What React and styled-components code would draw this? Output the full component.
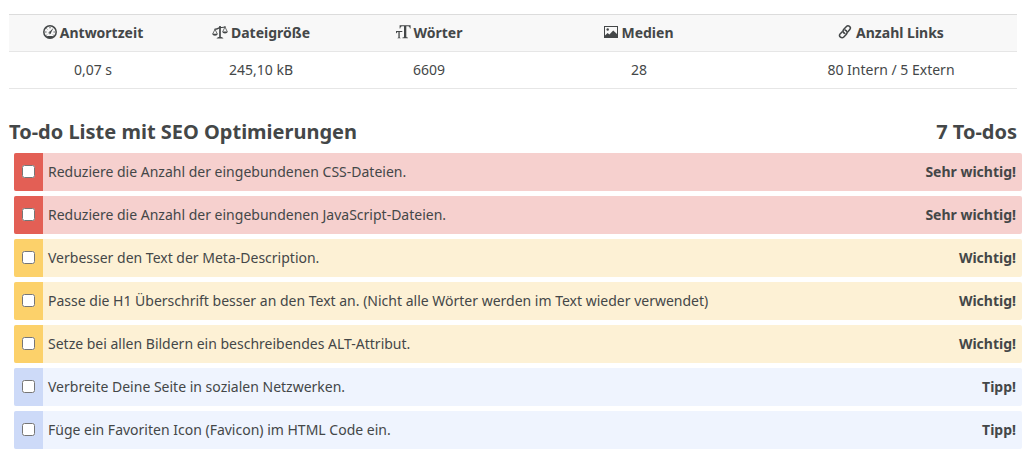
import React from "react";
import styled, { createGlobalStyle } from "styled-components";

const GlobalStyle = createGlobalStyle`
  * { box-sizing: border-box; }
  body {
    margin: 0;
    background: #fff;
    color: #444748;
    font-family: "Noto Sans", sans-serif;
    font-size: 14px;
    line-height: 20px;
  }
`;

const Page = styled.main`
  padding: 14px 10px 6px 9px;
`;

const StatsTable = styled.table`
  width: 100%;
  table-layout: fixed;
  border-collapse: separate;
  border-spacing: 0;
  border-top: 1px solid #dcdcdc;
`;

const StatHead = styled.th`
  width: ${(p) => p.$share};
  padding: 8px 0;
  background: #f8f8f8;
  border-bottom: 1px solid #e6e6e6;
  font-weight: 700;
`;

const StatCell = styled.td`
  padding: 8px 0;
  border-bottom: 1px solid #e6e6e6;
  text-align: center;
`;

const HeadLabel = styled.span`
  display: flex;
  justify-content: center;
  align-items: center;
  gap: 3px;
`;

const Icon = styled.svg`
  display: block;
  flex: none;
  height: 16px;
  margin-bottom: 2px;
`;

const ListHeader = styled.header`
  display: flex;
  justify-content: space-between;
  align-items: center;
  margin-top: 29px;
`;

const Title = styled.h2`
  margin: 0;
  font-size: 20px;
  line-height: 28px;
  font-weight: 700;
`;

const TodoList = styled.ul`
  display: flex;
  flex-direction: column;
  gap: 5px;
  margin: 7px -5px 0 5px;
  padding: 0;
  list-style: none;
`;

const tones = {
  high: { mark: "#e35f55", fill: "#f6d0ce" },
  medium: { mark: "#fcd16a", fill: "#fdf1d5" },
  tip: { mark: "#cddaf8", fill: "#eff4fe" },
};

const TodoItem = styled.li`
  display: flex;
  align-items: center;
  min-height: 38px;
  padding-right: 6px;
  overflow: hidden;
  border-radius: 2px;
  background: ${(p) => tones[p.$tone].fill};
`;

const Mark = styled.span`
  display: flex;
  flex: none;
  align-self: stretch;
  align-items: center;
  justify-content: center;
  width: 29px;
  padding-bottom: 1px;
  background: ${(p) => tones[p.$tone].mark};
`;

const Checkbox = styled.input`
  width: 13px;
  height: 13px;
  margin: 0;
`;

const TodoLabel = styled.label`
  flex: 1;
  padding-left: 5px;
`;

const Priority = styled.strong`
  font-weight: 700;
`;

const GaugeIcon = () => (
  <Icon viewBox="0 0 14 16" width="14" aria-hidden="true" fill="none" stroke="currentColor">
    <circle cx="7" cy="8" r="6.2" strokeWidth="1.5" />
    <path d="M7 3v1.3M3.5 4.5l.8.8M2.2 8h1.3M10.5 8h1.3M3.4 11.3l.8-.6M10.6 11.3l-.8-.6" strokeWidth="1" />
    <path d="M10.6 3.8L6.1 8.2l1.5 1.3z" fill="currentColor" stroke="none" />
    <circle cx="6.8" cy="8.9" r=".9" strokeWidth=".8" />
    <path d="M3.9 12.1h6.200l-.9 2.100H4.800z" fill="currentColor" stroke="none" />
  </Icon>
);

const ScaleIcon = () => (
  <Icon viewBox="0 0 16 16" width="16" aria-hidden="true" fill="none" stroke="currentColor">
    <path d="M2.5 5.1C5.4 5.7 6 3.900 8 3.600s3.200.4 5.500-1.100" strokeWidth="1.2" />
    <path d="M8 2v11" strokeWidth="1.7" />
    <path d="M4.600 14.600c0-1.100 1.400-1.600 3.400-1.600s3.400.5 3.400 1.600z" fill="currentColor" stroke="none" />
    <path d="M3 5.300L.7 10M3 5.300L5.300 10M13 3l-2.300 4.700M13 3l2.300 4.700" strokeWidth=".8" />
    <path d="M.2 9.800h5.600c-.3 2.600-5.300 2.600-5.600 0zM10.200 7.500h5.600c-.3 2.600-5.300 2.600-5.600 0z" fill="currentColor" stroke="none" />
  </Icon>
);

const TextIcon = () => (
  <Icon viewBox="0 0 15 16" width="15" aria-hidden="true" fill="currentColor">
    <path d="M3.600 1.200h11v3.200h-.7c-.3-1.600-1-2.100-2.400-2.100h-1.200v10.300c0 .7.5.9 1.600 1v.7H6.400v-.7c1.100-.1 1.600-.3 1.600-1V2.300H6.700c-1.400 0-2.100.5-2.400 2.100h-.7z" />
    <path d="M0 7h6.300v.9H3.700v5.400c0 .4.300.6 1 .6v.4H1.400v-.4c.7 0 1-.2 1-.6V7.900c-1.100 0-1.600.2-1.800 1.300H0z" />
  </Icon>
);

const ImageIcon = () => (
  <Icon viewBox="0 0 14 16" width="14" aria-hidden="true" fill="currentColor">
    <path fillRule="evenodd" d="M0 2h14v12H0zM1 3v8.600l2.600-2.500 1.800 1.300 3.800-4 3.800 3.500V3z" />
    <circle cx="3.700" cy="5.500" r="1.200" />
  </Icon>
);

const LinkIcon = () => (
  <Icon viewBox="0 0 14 16" width="15" aria-hidden="true" fill="none" stroke="currentColor" strokeWidth="1.500" strokeLinecap="round">
    <path d="M5.200 8.700C4.200 7.700 4.400 6.300 5.300 5.300L7.700 2.700C9.800.5 13.200 3.100 11.300 5.600L9.200 8" />
    <path d="M7.700 6.700C8.800 7.700 8.800 9.100 7.900 10.200L5.300 12.900C3.200 15.100-.3 12.400 1.600 9.900L3.500 7.900" />
    <path d="M5.200 8.700l1.200.8M7.700 6.700l-1.200-.7" />
  </Icon>
);

const stats = [
  { label: "Antwortzeit", value: "0,07 s", share: "16.6667%", Glyph: GaugeIcon },
  { label: "Dateigröße", value: "245,10 kB", share: "16.6667%", Glyph: ScaleIcon },
  { label: "Wörter", value: "6609", share: "16.6667%", Glyph: TextIcon },
  { label: "Medien", value: "28", share: "25%", Glyph: ImageIcon },
  { label: "Anzahl Links", value: "80 Intern / 5 Extern", share: "25%", Glyph: LinkIcon },
];

const todos = [
  { tone: "high", text: "Reduziere die Anzahl der eingebundenen CSS-Dateien." },
  { tone: "high", text: "Reduziere die Anzahl der eingebundenen JavaScript-Dateien." },
  { tone: "medium", text: "Verbesser den Text der Meta-Description." },
  { tone: "medium", text: "Passe die H1 Überschrift besser an den Text an. (Nicht alle Wörter werden im Text wieder verwendet)" },
  { tone: "medium", text: "Setze bei allen Bildern ein beschreibendes ALT-Attribut." },
  { tone: "tip", text: "Verbreite Deine Seite in sozialen Netzwerken." },
  { tone: "tip", text: "Füge ein Favoriten Icon (Favicon) im HTML Code ein." },
];

const priorities = { high: "Sehr wichtig!", medium: "Wichtig!", tip: "Tipp!" };

export default function App() {
  return (
    <Page>
      <GlobalStyle />
      <StatsTable>
        <thead>
          <tr>
            {stats.map(({ label, share, Glyph }) => (
              <StatHead key={label} scope="col" $share={share}>
                <HeadLabel>
                  <Glyph />
                  {label}
                </HeadLabel>
              </StatHead>
            ))}
          </tr>
        </thead>
        <tbody>
          <tr>
            {stats.map(({ label, value }) => (
              <StatCell key={label}>{value}</StatCell>
            ))}
          </tr>
        </tbody>
      </StatsTable>
      <ListHeader>
        <Title>To-do Liste mit SEO Optimierungen</Title>
        <Title as="span">{todos.length} To-dos</Title>
      </ListHeader>
      <TodoList>
        {todos.map(({ tone, text }, i) => (
          <TodoItem key={text} $tone={tone}>
            <Mark $tone={tone}>
              <Checkbox type="checkbox" id={`todo-${i}`} />
            </Mark>
            <TodoLabel htmlFor={`todo-${i}`}>{text}</TodoLabel>
            <Priority>{priorities[tone]}</Priority>
          </TodoItem>
        ))}
      </TodoList>
    </Page>
  );
}
